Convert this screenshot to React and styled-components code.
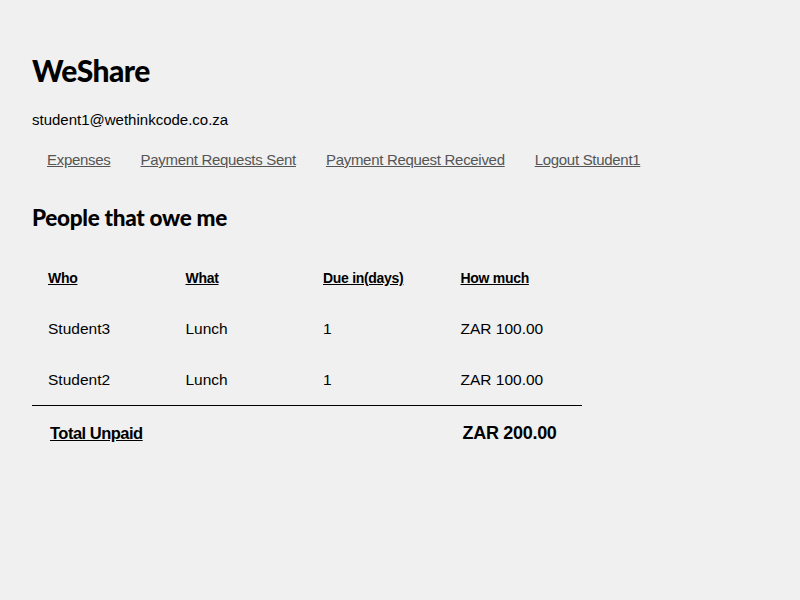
import styled, { createGlobalStyle } from "styled-components";

const GlobalStyle = createGlobalStyle`
    body {
        margin: 0;
        background: #f0f0f0;
        font-family: "Liberation Sans", Arial, sans-serif;
        color: #000;
    }
`;

const Page = styled.div`
    padding: 50px 32px 0 32px;
`;
const Title = styled.h1`
    font-family: Lato, sans-serif;
    font-weight: 900;
    font-size: 30px;
    line-height: 40px;
    margin: 0;
    letter-spacing: -0.5px;
`;
const Email = styled.div`
    font-size: 15px;
    line-height: 20px;
    margin-top: 20px;
`;
const Nav = styled.nav`
    display: flex;
    gap: 30px;
    padding: 0 15px;
    margin-top: 20px;
`;
const NavLink = styled.a`
    color: #555;
    font-size: 15px;
    line-height: 20px;
    text-decoration: underline;
    letter-spacing: -0.3px;
`;
const Heading = styled.h2`
    font-family: Lato, sans-serif;
    font-weight: 900;
    font-size: 22.5px;
    line-height: 30px;
    margin: 33px 0 0 0;
    letter-spacing: -0.3px;
`;
const Table = styled.table`
    width: 550px;
    table-layout: fixed;
    border-collapse: collapse;
    margin-top: 20px;
    font-size: 15.5px;
`;
const Th = styled.th`
    text-align: left;
    font-weight: 700;
    font-size: 14px;
    letter-spacing: -0.3px;
    text-decoration: underline;
    padding: 0 16px;
    height: 50px;
    vertical-align: middle;
`;
const Td = styled.td`
    padding: 0 16px;
    height: 51px;
    vertical-align: middle;
`;
const TotalRow = styled.tr`
    border-top: 1px solid #000;
    td {
        font-weight: 700;
        font-size: 18px;
        padding: 0 18px;
        height: 54px;
        white-space: nowrap;
        letter-spacing: -0.3px;
    }
`;
const TotalLabel = styled.span`
    text-decoration: underline;
    font-size: 16.5px;
    letter-spacing: -0.5px;
`;

const rows = [
    { who: "Student3", what: "Lunch", due: 1, amount: "ZAR 100.00" },
    { who: "Student2", what: "Lunch", due: 1, amount: "ZAR 100.00" },
];

export default function App() {
    return (
        <Page>
            <GlobalStyle />
            <Title>WeShare</Title>
            <Email>student1@wethinkcode.co.za</Email>
            <Nav>
                <NavLink href="#">Expenses</NavLink>
                <NavLink href="#">Payment Requests Sent</NavLink>
                <NavLink href="#">Payment Request Received</NavLink>
                <NavLink href="#">Logout Student1</NavLink>
            </Nav>
            <Heading>People that owe me</Heading>
            <Table>
                <thead>
                    <tr>
                        <Th>Who</Th>
                        <Th>What</Th>
                        <Th>Due in(days)</Th>
                        <Th>How much</Th>
                    </tr>
                </thead>
                <tbody>
                    {rows.map((r, i) => (
                        <tr key={i}>
                            <Td>{r.who}</Td>
                            <Td>{r.what}</Td>
                            <Td>{r.due}</Td>
                            <Td>{r.amount}</Td>
                        </tr>
                    ))}
                    <TotalRow>
                        <td>
                            <TotalLabel>Total Unpaid</TotalLabel>
                        </td>
                        <td></td>
                        <td></td>
                        <td>ZAR 200.00</td>
                    </TotalRow>
                </tbody>
            </Table>
        </Page>
    );
}
